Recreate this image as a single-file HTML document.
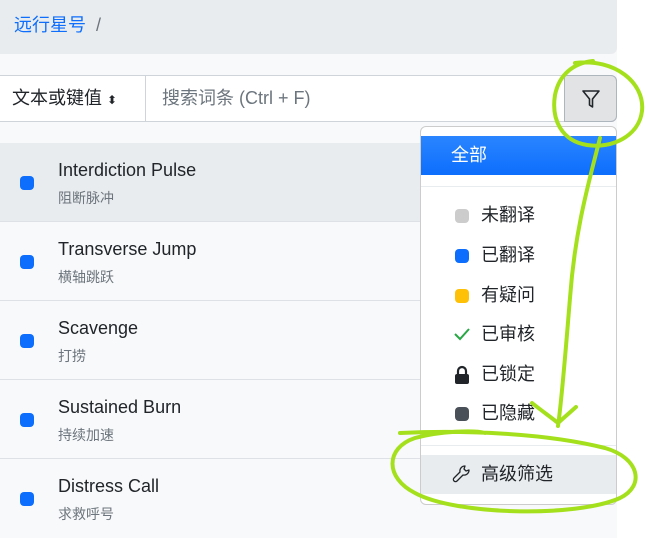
<!DOCTYPE html>
<html><head><meta charset="utf-8"><style>
*{box-sizing:border-box;margin:0;padding:0}
body{width:646px;height:523px;overflow:hidden;background:#fff;font-family:"Liberation Sans","Noto Sans CJK SC",sans-serif;position:relative}
.main{position:absolute;left:0;top:0;width:617px;height:523px;background:#f8f9fa}
.bc{position:absolute;left:0;top:0;width:617px;height:54px;background:#e9ecef;border-radius:0 0 6px 0;font-size:18px;line-height:50px;padding-left:14px;color:#6c757d}
.bc a{color:#0d6efd;text-decoration:none}
.ig{position:absolute;left:0;top:75px;width:617px;height:47px;background:#fff;border:1px solid #ced4da;border-left:none;border-radius:0 6px 6px 0}
.sel{position:absolute;left:0;top:0;width:146px;height:45px;border-right:1px solid #ced4da;font-size:18px;line-height:45px;padding-left:12px;color:#212529}
.ph{position:absolute;left:162px;top:0;line-height:45px;font-size:18px;color:#6c757d}
.fb{position:absolute;right:-1px;top:-1px;width:53px;height:47px;background:#e2e3e5;border:1px solid #adb5bd;border-radius:0 6px 6px 0}
.row{position:absolute;left:0;width:617px;height:79px;border-bottom:1px solid #dee2e6;background:#f8f9fa}
.row .d{position:absolute;left:20px;top:33px;width:14px;height:14px;border-radius:4px;background:#0d6efd}
.row .t{position:absolute;left:58px;top:17px;font-size:18px;color:#212529}
.row .s{position:absolute;left:58px;top:45px;font-size:14px;color:#6c757d}
.dd{position:absolute;left:420px;top:126px;width:197px;height:379px;background:#fff;border:1px solid #ccc;border-radius:6px}
.it{position:absolute;left:0;width:195px;height:39px;font-size:18px;line-height:39px;padding-left:60px;color:#212529}
.dv{position:absolute;left:0;width:195px;border-top:1px solid #e9ecef}
.ic{position:absolute;left:34px;top:13px;width:14px;height:14px;border-radius:4px}
</style></head><body>
<div class="main">
<div class="bc"><a>远行星号</a> &nbsp;/</div>
<div class="ig"><div class="sel">文本或键值 <span style="font-size:12px">&#x2B0D;</span></div><div class="ph">搜索词条 (Ctrl + F)</div>
<div class="fb"><svg width="53" height="47" viewBox="0 0 53 47"><path d="M18 15h16l-6.5 8v8l-3 -2v-6z" fill="none" stroke="#212529" stroke-width="1.6" stroke-linejoin="round"/></svg></div></div>
<div class="row" style="top:143px;background:#e9ecef"><div class="d"></div><div class="t">Interdiction Pulse</div><div class="s">阻断脉冲</div></div>
<div class="row" style="top:222px"><div class="d"></div><div class="t">Transverse Jump</div><div class="s">横轴跳跃</div></div>
<div class="row" style="top:301px"><div class="d"></div><div class="t">Scavenge</div><div class="s">打捞</div></div>
<div class="row" style="top:380px"><div class="d"></div><div class="t">Sustained Burn</div><div class="s">持续加速</div></div>
<div class="row" style="top:459px;border:none"><div class="d"></div><div class="t">Distress Call</div><div class="s">求救呼号</div></div>
</div>
<div class="dd">
<div class="it" style="top:9px;color:#fff;padding-left:30px;background:linear-gradient(#2a85ff,#0d6efd)">全部</div>
<div class="dv" style="top:59px"></div>
<div class="it" style="top:69px"><div class="ic" style="background:#ccc"></div>未翻译</div>
<div class="it" style="top:109px"><div class="ic" style="background:#0d6efd"></div>已翻译</div>
<div class="it" style="top:149px"><div class="ic" style="background:#ffc107"></div>有疑问</div>
<div class="it" style="top:188px"><svg style="position:absolute;left:32px;top:12px" width="18" height="14"><path d="M2 7l5 5 9-10" fill="none" stroke="#28a745" stroke-width="2"/></svg>已审核</div>
<div class="it" style="top:228px"><svg style="position:absolute;left:33px;top:10px" width="16" height="20"><path d="M4 9V6a4 4 0 0 1 8 0v3" fill="none" stroke="#212529" stroke-width="2.2"/><rect x="1" y="9" width="14" height="10" rx="2" fill="#212529"/></svg>已锁定</div>
<div class="it" style="top:267px"><div class="ic" style="background:#495057"></div>已隐藏</div>
<div class="dv" style="top:318px"></div>
<div class="it" style="top:328px;background:#e9ecef"><svg style="position:absolute;left:31px;top:9px" width="20" height="20" viewBox="0 0 20 20"><path d="M13 2a5 5 0 0 0-5 6L2 14a2 2 0 0 0 3 3l6-6a5 5 0 0 0 6-5l-3 1-2-2 1-3z" fill="none" stroke="#212529" stroke-width="1.3" stroke-linejoin="round"/></svg>高级筛选</div>
</div>
<svg style="position:absolute;left:0;top:0" width="646" height="523"><g fill="none" stroke="#a4e01c" stroke-width="4" stroke-linecap="round">
<path d="M575 63c40 -5 70 20 67 48-3 25-30 38-55 34-25-4-36-25-32-50 4-20 18-32 38-34"/>
<path d="M600 138c-10 40-25 90-30 160-5 60-8 100-12 128"/>
<path d="M532 403c10 8 20 15 26 20l18-16"/>
<path d="M485 433c-10-3-45-2-70 5-30 10-30 40 0 55 40 22 160 25 205 5 25-12 20-40-15-50-60-15-140-18-205-15"/>
</g></svg>
</body></html>
